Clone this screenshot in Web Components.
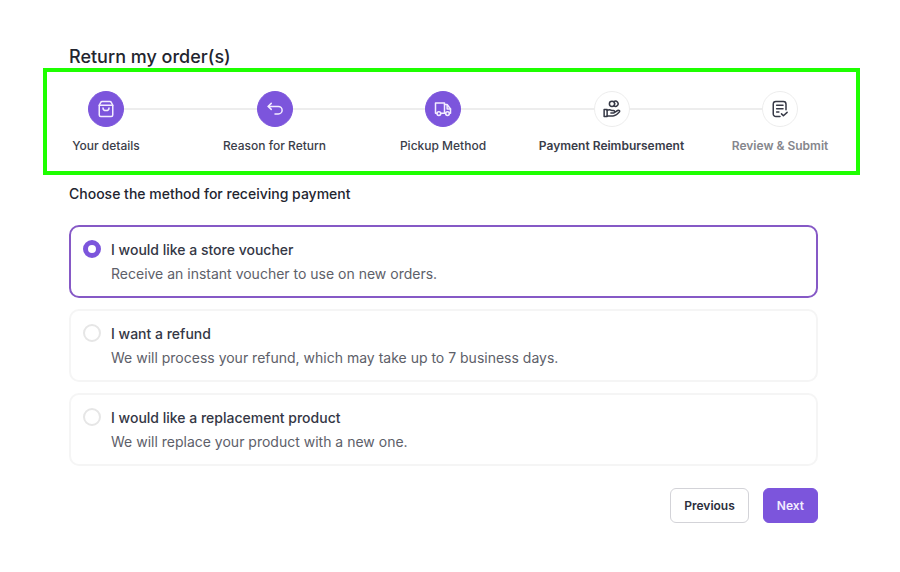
<!DOCTYPE html>
<html lang="en">
<head>
<meta charset="utf-8">
<meta name="viewport" content="width=device-width, initial-scale=1">
<title>Return my order(s)</title>
<style>
  body {
    margin: 0;
    background: #fff;
    color: #23252f;
    font-family: Inter, "Liberation Sans", sans-serif;
    --accent: #7c55dc;
    --line: #ededed;
    --ink: #23252f;
    --soft: #5d6069;
  }
</style>
</head>
<body>
<return-page>
  <span slot="title">Return my order(s)</span>
  <step-list slot="steps">
    <step-item state="done" icon="bag">Your details</step-item>
    <step-item state="done" icon="undo">Reason for Return</step-item>
    <step-item state="done" icon="truck">Pickup Method</step-item>
    <step-item state="current" icon="hand">Payment Reimbursement</step-item>
    <step-item state="todo" icon="note">Review &amp; Submit</step-item>
  </step-list>
  <method-picker legend="Choose the method for receiving payment"></method-picker>
  <action-button slot="actions">Previous</action-button>
  <action-button slot="actions" primary>Next</action-button>
</return-page>

<script>
const ICONS = {
  bag: '<path d="M3 7v13a2 2 0 0 0 2 2h14a2 2 0 0 0 2-2V7z"/><path d="M3 7l2-3.800a2 2 0 0 1 1.800-1.200h10.400a2 2 0 0 1 1.800 1.200L21 7"/><path d="M8 10.500a4 3.500 0 0 0 8 0"/>',
  undo: '<path d="M7 4.500 3 8.500l4 4"/><path d="M3 8.500h13.500a5 5 0 0 1 0 10H12"/>',
  truck: '<path d="M4 17.500H2V4h12v13.500H9"/><path d="M14 6h3.500L22 12v5.500h-1.500"/><path d="M14 17.500h1.500M17.500 7v5H22"/><circle cx="6.500" cy="18" r="2.500"/><circle cx="18" cy="18" r="2.500"/>',
  hand: '<circle cx="12" cy="5" r="3.500"/><path d="M14.500 2.200a3.500 3.500 0 1 1 0 5.600M15.500 5h.1"/><path d="M1.500 12.500h4v9.500h-4z"/><path d="M5.500 14c2-1.500 4-1.500 6 0H14c2 0 2 3.300 0 3.300h-3.500 4l5-3.300c2-1 3.500.7 2 2.200-2 2.500-4.500 5-8 5h-8"/>',
  note: '<path d="M12 22H6.500A3.500 3.500 0 0 1 3 18.500v-13A3.500 3.500 0 0 1 6.500 2h10A3.500 3.500 0 0 1 20 5.500V13"/><path d="M7.500 7h8.500M7.500 11.500h8.500M7.500 16h3"/><path d="m14 18.500 2.500 2.500 5-4.500"/>'
};

const define = (name, html, setup) => {
  const template = document.createElement('template');
  template.innerHTML = html;
  customElements.define(name, class extends HTMLElement {
    constructor() {
      super();
      this.attachShadow({ mode: 'open' }).append(template.content.cloneNode(true));
    }
    connectedCallback() {
      if (setup) setup(this, this.shadowRoot);
    }
  });
};

define('return-page', `
  <style>
    :host { display: block; padding: 46px 40px 48px 43px; }
    h1 { margin: 0 26px; font-size: 18px; line-height: 22px; font-weight: 500; }
    nav { border: 4px solid #1eff00; padding: 19px 58px 16px 41px; }
    .body { padding: 8px 42px 0 26px; }
    footer { display: flex; justify-content: flex-end; gap: 14px; margin-top: 22px; }
  </style>
  <main>
    <h1><slot name="title"></slot></h1>
    <nav aria-label="Progress"><slot name="steps"></slot></nav>
    <div class="body">
      <slot></slot>
      <footer><slot name="actions"></slot></footer>
    </div>
  </main>`);

define('step-list', `
  <style>
    :host { display: flex; justify-content: space-between;
      background: linear-gradient(var(--line), var(--line)) 0 17px / 100% 2px no-repeat; }
  </style>
  <slot></slot>`, host => host.setAttribute('role', 'list'));

define('step-item', `
  <style>
    :host { display: flex; flex-direction: column; align-items: center; gap: 10px;
      width: 36px; color: #3a3d49; font-size: 12px; line-height: 18px; font-weight: 500; white-space: nowrap; }
    :host([state="current"]) { font-weight: 600; }
    :host([state="todo"]) { color: #85868c; font-weight: 600; }
    .dot { box-sizing: border-box; display: grid; place-items: center; width: 36px; height: 36px;
      border: 1px solid var(--line); border-radius: 50%; background: #fff; color: #363946; }
    :host([state="done"]) .dot { background: var(--accent); border-color: var(--accent); color: #f3edff; }
    svg { width: 18px; height: 18px; fill: none; stroke: currentColor; stroke-width: 2;
      stroke-linecap: round; stroke-linejoin: round; }
  </style>
  <span class="dot"><svg viewBox="0 0 24 24" aria-hidden="true"></svg></span>
  <span><slot></slot></span>`, (host, root) => {
  host.setAttribute('role', 'listitem');
  if (host.getAttribute('state') === 'current') host.setAttribute('aria-current', 'step');
  root.querySelector('svg').innerHTML = ICONS[host.getAttribute('icon')];
});

define('method-picker', `
  <style>
    :host { display: block; }
    fieldset { margin: 0; padding: 0; border: 0; min-width: 0; }
    legend { padding: 0; margin-bottom: 20px; font-size: 14px; line-height: 22px; font-weight: 500; }
    .list { display: grid; gap: 11px; }
    label { box-sizing: border-box; display: grid; grid-template-columns: 18px 1fr; column-gap: 10px;
      padding: 11px 12px 10px; border: 2px solid #f5f5f5; border-radius: 10px; font-size: 14px; line-height: 24px; }
    label:has(:checked) { border-color: #8659c6; }
    input { appearance: none; box-sizing: border-box; width: 18px; height: 18px; margin: 2px 0 0;
      border: 2px solid #e6e6e6; border-radius: 50%; background: #fff; }
    input:checked { border: 5px solid var(--accent); }
    strong { display: block; font-weight: 500; color: #343745; }
    small { display: block; font-size: 14px; line-height: 24px; color: var(--soft); }
  </style>
  <fieldset>
    <legend></legend>
    <div class="list">
      <label><input type="radio" name="method" checked><span><strong>I would like a store voucher</strong><small>Receive an instant voucher to use on new orders.</small></span></label>
      <label><input type="radio" name="method"><span><strong>I want a refund</strong><small>We will process your refund, which may take up to 7 business days.</small></span></label>
      <label><input type="radio" name="method"><span><strong>I would like a replacement product</strong><small>We will replace your product with a new one.</small></span></label>
    </div>
  </fieldset>`, (host, root) => {
  root.querySelector('legend').textContent = host.getAttribute('legend');
});

define('action-button', `
  <style>
    :host { display: block; }
    button { box-sizing: border-box; height: 35px; padding: 0 13px; border: 1px solid #d3d3d8; border-radius: 6px;
      background: #fff; color: #2c2f3d; font: 600 12px/18px Inter, "Liberation Sans", sans-serif; }
    :host([primary]) button { background: var(--accent); border-color: var(--accent); color: #f3edff; }
  </style>
  <button type="button"><slot></slot></button>`);
</script>
</body>
</html>
